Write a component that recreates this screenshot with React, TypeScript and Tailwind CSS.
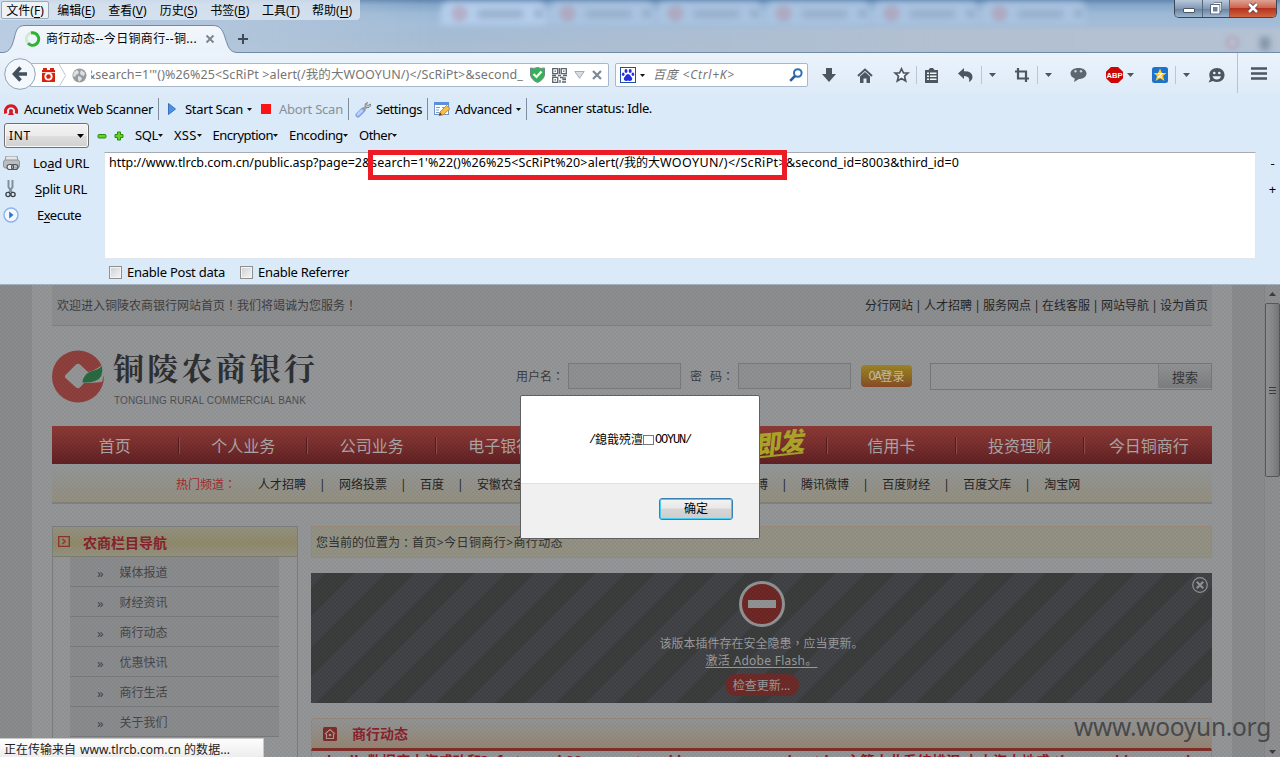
import { useLayoutEffect, useRef, useState } from "react";
import type { ReactNode } from "react";

/* Text spread over the full width of its box by letter spacing. */
function Fit({ className, children }: { className: string; children: ReactNode }) {
  const box = useRef<HTMLSpanElement>(null);
  const text = useRef<HTMLSpanElement>(null);
  const [spacing, setSpacing] = useState(0);
  useLayoutEffect(() => {
    if (!box.current || !text.current) return;
    const n = (text.current.textContent || "x").length;
    setSpacing((box.current.getBoundingClientRect().width - text.current.getBoundingClientRect().width) / n);
  }, []);
  return (
    <span ref={box} className={"inline-block shrink-0 whitespace-pre " + className}>
      <span ref={text} style={{ letterSpacing: spacing }}>
        {children}
      </span>
    </span>
  );
}

/* Full-width punctuation centred in its cell. */
const P = ({ children }: { children: string }) => (
  <span lang="zh-TW" className="font-['Noto_Sans_CJK_TC',sans-serif] leading-none">
    {children}
  </span>
);

/* Half-width 6px cell Latin letters, as in a bitmap song font. */
const Half = ({ children }: { children: string }) => (
  <span className="font-['Liberation_Mono',monospace] text-[12px] tracking-[-1.2px]">{children}</span>
);

const Caret = ({ className = "" }: { className?: string }) => (
  <svg width="7" height="4" viewBox="0 0 7 4" className={"shrink-0 " + className}>
    <path d="M0 0h7L3.5 4z" fill="currentColor" />
  </svg>
);

const TinyCaret = ({ className = "" }: { className?: string }) => (
  <svg width="5" height="3" viewBox="0 0 5 3" className={"shrink-0 " + className}>
    <path d="M0 0h5L2.5 3z" fill="#111" />
  </svg>
);

const menus = [
  ["文件", "F"],
  ["编辑", "E"],
  ["查看", "V"],
  ["历史", "S"],
  ["书签", "B"],
  ["工具", "T"],
  ["帮助", "H"],
];

function TitleBar() {
  return (
    <div className="relative h-[53px] shrink-0 overflow-hidden bg-[linear-gradient(180deg,#6288b0_0px,#86a7ca_5px,#9db9d6_14px,#a4bdd8_25px,#a5bcd4_36px,#abbed2_52px)]">
      <div className="absolute -left-2 top-0 h-[60px] w-[440px] bg-[linear-gradient(90deg,#c3d5e8,#b5c8dc_60%,#a5bbd400)] opacity-70 blur-[3px]" />
      <div className="absolute left-[441px] top-[2px] flex gap-[3px] blur-[3px]">
        {[0, 1, 2, 3, 4, 5].map((i) => (
          <div
            key={i}
            className={
              "flex h-[23px] w-[105px] items-center rounded-t-lg " +
              (i === 0 ? "bg-[#b4cdeb]" : "bg-[#a9c3e0]")
            }
          >
            <span className="ml-3 size-[13px] rounded-full border-[3px] border-[#b4889a]" />
            <span className="ml-3 h-[8px] w-[45px] bg-[#98afca]" />
            <span className="ml-3 size-[7px] bg-[#8fa7c2]" />
          </div>
        ))}
      </div>
      <div className="absolute left-[430px] top-[28px] h-[24px] w-[860px] bg-[linear-gradient(90deg,#abbfd500,#b2c0d1_60%,#b4c2d3)] blur-[2px]" />
      <div className="absolute left-[1226px] top-[36px] size-[13px] rounded-full border-2 border-[#b99dae] blur-[2px]" />
      <div className="absolute left-[1260px] top-[37px] h-[13px] w-[10px] bg-[#8293a8] blur-[3px]" />

      <div className="relative flex h-[20px] w-[360px] items-center rounded-br bg-[#dce6f1cc] pl-px text-[12px] leading-[18px]">
        {menus.map(([name, key], i) => (
          <div
            key={key}
            className={
              "mr-[3.2px] flex h-[18px] w-[48px] items-center justify-center whitespace-nowrap rounded-[2px] border pt-px " +
              (i === 0 ? "border-[#9aa8b8] bg-[#edf2f7]" : "border-transparent")
            }
          >
            {name}(<span className="underline underline-offset-2">{key}</span>)
          </div>
        ))}
      </div>

      <svg className="absolute left-0 top-[23px]" width="1280" height="30" viewBox="0 0 1280 30">
        <defs>
          <linearGradient id="tab" x1="0" y1="0" x2="0" y2="1">
            <stop offset="0" stopColor="#f3f7fc" />
            <stop offset="1" stopColor="#e9f1fa" />
          </linearGradient>
        </defs>
        <path
          d="M0 29.5H3C10 29 12 23 14 16C16 8 17 2.500 25 2.500H213C221 2.500 223 8 225.500 16C228 23 229 29 237 29.500V30H0Z"
          fill="url(#tab)"
        />
        <path
          d="M0 29.500H3C10 29 12 23 14 16C16 8 17 2.500 25 2.500H213C221 2.500 223 8 225.500 16C228 23 229 29 237 29.500H1280"
          fill="none"
          stroke="#7089a6"
        />
      </svg>
      <div className="relative mt-[9px] flex h-[20px] items-center pl-[25px] text-[12px]">
        <svg width="16" height="16" viewBox="0 0 16 16">
          <circle cx="7.500" cy="8" r="6.200" fill="none" stroke="#d3ead2" strokeWidth="3" />
          <path d="M6 2A6.200 6.200 0 1 1 3 12.300" fill="none" stroke="#2fb135" strokeWidth="3" />
        </svg>
        <Fit className="ml-[5px] w-[151px]">商行动态--今日铜商行--铜...</Fit>
        <svg className="ml-[8px]" width="10" height="10" viewBox="0 0 10 10">
          <path d="M1.500 1.500L8.500 8.500M8.500 1.500L1.500 8.500" stroke="#7d8793" strokeWidth="2" />
        </svg>
        <svg className="ml-[22px]" width="12" height="12" viewBox="0 0 12 12">
          <path d="M6 1v10M1 6h10" stroke="#3f4a57" strokeWidth="2" />
        </svg>
      </div>

      <div className="absolute left-[1174px] top-0 flex h-[18px] w-[103px] overflow-hidden rounded-b-[5px] border border-t-0 border-[#3d4652]">
        <div className="flex w-[28px] justify-center border-r border-[#56687d] bg-[linear-gradient(180deg,#b9c9dc,#8199b5_50%,#67829f_51%,#9db5ce)]">
          <span className="mt-[8px] h-[5px] w-[12px] rounded-[1px] border border-[#4d5866] bg-white" />
        </div>
        <div className="flex w-[27px] justify-center border-r border-[#56687d] bg-[linear-gradient(180deg,#b9c9dc,#8199b5_50%,#67829f_51%,#9db5ce)]">
          <svg className="mt-px" width="14" height="14" viewBox="0 0 14 14">
            <path d="M5 2.500H11.500V9H10" fill="none" stroke="#4d5866" strokeWidth="3" />
            <path d="M5 2.500H11.500V9H10" fill="none" stroke="#fff" strokeWidth="1.500" />
            <rect x="3" y="5" width="6.500" height="6.500" fill="none" stroke="#4d5866" strokeWidth="3.500" />
            <rect x="3" y="5" width="6.500" height="6.500" fill="#67829f" stroke="#fff" strokeWidth="2" />
          </svg>
        </div>
        <div className="flex flex-1 justify-center bg-[linear-gradient(180deg,#dfa294,#cc6650_45%,#b5331c_50%,#cf6543)]">
          <svg className="mt-[2px]" width="12" height="12" viewBox="0 0 12 12">
            <path d="M2 2L10 10M10 2L2 10" stroke="#56363a" strokeWidth="4" />
            <path d="M2 2L10 10M10 2L2 10" stroke="#fff" strokeWidth="2.600" />
          </svg>
        </div>
      </div>
    </div>
  );
}

function NavBar() {
  return (
    <div className="relative flex h-[44px] shrink-0 items-center bg-[linear-gradient(180deg,#ebf3fb,#dceaf8)] text-[#4b5661]">
      <div className="ml-[30px] flex h-[24px] w-[579px] items-center rounded-r-[2px] border border-[#a7b8cb] bg-white">
        <svg className="ml-[10px]" width="15" height="15" viewBox="0 0 15 15">
          <path d="M2 0h4v2h3V0h4v2h1v12H1V2h1z" fill="#d5210d" />
          <circle cx="7.500" cy="8.500" r="3.200" fill="none" stroke="#fff" strokeWidth="1.800" />
          <path d="M1 4.500h13" stroke="#fff" strokeWidth=".8" />
        </svg>
        <svg className="ml-[3px]" width="8" height="23" viewBox="0 0 8 23">
          <path d="M0 0L6.500 11.500L0 23" fill="none" stroke="#bcc7d3" />
        </svg>
        <svg className="ml-[5px]" width="15" height="15" viewBox="0 0 15 15">
          <circle cx="7.500" cy="7.500" r="7" fill="#969ba0" />
          <path d="M2 4l3-2 2 2-1 2-2 1-1 2-2-1zM9 2l4 3-1 3-3-1-1-2zM6 8l3 1 1 2-3 3-1-3z" fill="#dde0e2" />
        </svg>
        <span className="ml-[4px] flex w-[434px] overflow-hidden text-[12.500px] text-[#767676]">
          <Fit className="-ml-[5px] w-[437px]">{"&search=1'\"()%26%25<ScRiPt >alert(/我的大WOOYUN/)</ScRiPt>&second_"}</Fit>
        </span>
        <svg className="ml-[5px]" width="15" height="16" viewBox="0 0 15 16">
          <path d="M.5 1Q4 2 7.500 .5Q11 2 14.500 1V8Q13.500 13 7.500 15.500Q1.500 13 .5 8Z" fill="#35b157" stroke="#6e8a85" />
          <path d="M3.500 7L6.500 10L11.500 4.500" fill="none" stroke="#fff" strokeWidth="2.200" />
        </svg>
        <svg className="ml-[7px]" width="15" height="15" viewBox="0 0 15 15" fill="none" stroke="#5a6570" strokeWidth="1.300">
          <path d="M.7.7h5v5h-5zM9.300.7h5v5h-5zM.7 9.300h5v5h-5zM2.500 3.200h1.500M11 3.200h1.500M2.500 11.800h1.500M7.500 0v6M0 7.500h4M6 7.500h3M11 7.500h4M8 9.500h3v2h3M8 12v3M10 14h4M13 9v2" />
        </svg>
        <svg className="ml-[7px]" width="11" height="8" viewBox="0 0 11 8">
          <path d="M.8.5H10.200L5.500 7.300z" fill="#d8dce5" stroke="#a4abb8" />
        </svg>
        <svg className="ml-[7px]" width="10" height="10" viewBox="0 0 10 10">
          <path d="M1 1L9 9M9 1L1 9" stroke="#7c8895" strokeWidth="2.200" />
        </svg>
      </div>
      <svg className="absolute left-[4px] top-[5px]" width="33" height="33" viewBox="0 0 33 33">
        <circle cx="16" cy="16" r="15.300" fill="#f3f8fd" stroke="#8fa3b9" />
        <path d="M9.500 16H23M16.500 9.500L10.500 16L16.500 22.500" fill="none" stroke="#424f5e" strokeWidth="3.600" />
      </svg>

      <div className="ml-[6px] flex h-[24px] w-[193px] items-center rounded-[2px] border border-[#a7b8cb] bg-white">
        <svg className="ml-[4px]" width="16" height="16" viewBox="0 0 16 16">
          <rect x=".5" y=".5" width="15" height="15" fill="#fff" stroke="#1a4fae" />
          <g fill="#2430e0">
            <ellipse cx="6" cy="4" rx="1.500" ry="2" />
            <ellipse cx="10.200" cy="4" rx="1.500" ry="2" />
            <ellipse cx="3.200" cy="7.300" rx="1.300" ry="1.800" />
            <ellipse cx="12.900" cy="7.300" rx="1.300" ry="1.800" />
            <path d="M8 7Q10 7 11 9.500Q13 11 12 13Q10 14.500 8 13.500Q6 14.500 4 13Q3 11 5 9.500Q6 7 8 7Z" />
          </g>
        </svg>
        <TinyCaret className="ml-[4px]" />
        <Fit className="ml-[8px] w-[82px] text-[12px] italic text-[#757575]">{"百度 <Ctrl+K>"}</Fit>
        <svg className="ml-[54px]" width="14" height="14" viewBox="0 0 14 14">
          <circle cx="8.800" cy="5" r="3.800" fill="#fff" stroke="#2f6fae" strokeWidth="2" />
          <path d="M6 8L1.200 12.800" stroke="#2a5f97" strokeWidth="2.600" />
        </svg>
      </div>

      <div className="ml-[3px] flex w-[36px] justify-center">
        <svg width="14" height="14" viewBox="0 0 14 14">
          <path d="M4 0h6v6h4L7 14L0 6h4z" fill="currentColor" />
        </svg>
      </div>
      <div className="flex w-[36px] justify-center">
        <svg width="16" height="15" viewBox="0 0 16 15">
          <path d="M1 8L8 1.500L15 8" fill="none" stroke="currentColor" strokeWidth="2" />
          <path d="M3 8.500L8 4L13 8.500V15H9.500V10.500h-3V15H3z" fill="currentColor" />
        </svg>
      </div>
      <div className="flex w-[33px] justify-center pl-[3px]">
        <svg width="17" height="16" viewBox="0 0 17 16">
          <path d="M8.500 1.800L10.500 6H15L11.500 9.200L12.700 14L8.500 11.500L4.300 14L5.500 9.200L2 6H6.500Z" fill="#f6fafd" stroke="currentColor" strokeWidth="1.700" />
        </svg>
      </div>
      <div className="flex h-[18px] w-[30px] items-center justify-center border-l border-[#b9c6d4]">
        <svg width="15" height="15" viewBox="0 0 15 15">
          <path d="M1 2h3.500L6 0h3l1.500 2H14v13H1z" fill="currentColor" />
          <path d="M3 5.200h2M6 5.200h6.500M3 8.200h2M6 8.200h6.500M3 11.200h2M6 11.200h6.500" stroke="#f2f7fc" strokeWidth="1.500" />
        </svg>
      </div>
      <div className="flex w-[35px] justify-center pl-[5px]">
        <svg width="16" height="14" viewBox="0 0 16 14">
          <path d="M0 5.500L6 0V3.200Q14.500 3 14.500 9Q14.500 12 11 14Q12.500 8 6 8V11Z" fill="currentColor" />
        </svg>
      </div>
      <div className="flex h-[18px] w-[21px] items-center justify-center border-l border-[#b9c6d4]">
        <Caret />
      </div>
      <div className="flex w-[35px] justify-center pl-[5px]">
        <svg width="14" height="14" viewBox="0 0 14 14">
          <path d="M3 0V10.500H14M0 3.500H11V14" fill="none" stroke="currentColor" strokeWidth="2.200" />
        </svg>
      </div>
      <div className="flex h-[18px] w-[21px] items-center justify-center border-l border-[#b9c6d4]">
        <Caret />
      </div>
      <div className="flex w-[40px] justify-center">
        <svg width="17" height="14" viewBox="0 0 17 14">
          <path d="M8.500 0C13 0 16.500 2.200 16.500 5.500S13 11 9 11L4 14L4.800 10.500C2 9.500 .5 7.800 .5 5.500C.5 2.200 4 0 8.500 0Z" fill="#5b6671" />
          <circle cx="5.500" cy="3.200" r="1.200" fill="#c8d0d8" />
          <circle cx="11" cy="3.200" r="1.200" fill="#c8d0d8" />
        </svg>
      </div>
      <div className="flex w-[25px] justify-center pl-[7px]">
        <svg className="shrink-0" width="17" height="16" viewBox="0 0 17 16">
          <path d="M5 0h7l5 4.700v6.600L12 16H5L0 11.300V4.700z" fill="#cc0505" />
          <text x="8.500" y="11" fontSize="7.500" fontWeight="bold" textAnchor="middle" fill="#fff" fontFamily="Liberation Sans">
            ABP
          </text>
        </svg>
      </div>
      <div className="flex w-[14px] justify-center">
        <Caret />
      </div>
      <div className="flex w-[38px] justify-center pl-[8px]">
        <svg width="16" height="16" viewBox="0 0 16 16">
          <rect width="16" height="16" rx="2.500" fill="#1d72cc" />
          <path d="M8 1.500L10 6H14.500L11 9L12.500 14L8 11.300L3.500 14L5 9L1.500 6H6Z" fill="#ffc631" />
          <path d="M6 6.500H10L6.500 10H10" fill="none" stroke="#fff" strokeWidth="1.200" />
        </svg>
      </div>
      <div className="flex h-[18px] w-[21px] items-center justify-center border-l border-[#b9c6d4]">
        <Caret />
      </div>
      <div className="flex w-[41px] justify-center">
        <svg width="17" height="15" viewBox="0 0 17 15">
          <path d="M9 0C13.500 0 16.500 3 16.500 7S13.500 14 9 14Q6.500 14 5 13L.5 14.500L2.300 11Q1.300 9 1.300 7C1.300 3 4.500 0 9 0Z" fill="currentColor" />
          <circle cx="6.300" cy="5" r="1.300" fill="#e8f0f8" />
          <circle cx="11.300" cy="5" r="1.300" fill="#e8f0f8" />
          <path d="M4.500 8.300H13Q12 11.500 8.800 11.500T4.500 8.300Z" fill="#e8f0f8" />
        </svg>
      </div>
      <div className="flex h-[40px] w-[43px] items-center justify-center self-start border-l border-[#b4c2d1]">
        <svg width="16" height="13" viewBox="0 0 16 13">
          <path d="M0 1.500h16M0 6.500h16M0 11.500h16" stroke="currentColor" strokeWidth="2.600" />
        </svg>
      </div>
    </div>
  );
}

function ScannerBar() {
  return (
    <div className="flex h-[24px] shrink-0 items-center text-[13px] leading-[18px]">
      <svg className="ml-[4px]" width="14" height="12" viewBox="0 0 14 12">
        <path d="M1.800 10.500A5.600 5.600 0 1 1 12.200 10.500" fill="none" stroke="#d81921" strokeWidth="3" />
        <circle cx="7" cy="8" r="2" fill="#d81921" />
        <path d="M4 12L6 8.500H8L10 12Z" fill="#d81921" />
      </svg>
      <Fit className="-mt-px ml-[6px] w-[129px]">Acunetix Web Scanner</Fit>
      <span className="ml-[5px] h-[22px] w-px bg-[#7f8d9d]" />
      <svg className="ml-[9px]" width="8" height="12" viewBox="0 0 8 12">
        <path d="M.5.5L7.500 6L.5 11.500z" fill="#4a92e8" stroke="#3a6fc0" />
      </svg>
      <Fit className="-mt-px ml-[9px] w-[58px]">Start Scan</Fit>
      <TinyCaret className="ml-[4px]" />
      <span className="ml-[9px] size-[10px] bg-[#fb1414]" />
      <Fit className="-mt-px ml-[8px] w-[64px] text-[#8b8f94]">Abort Scan</Fit>
      <span className="ml-[5px] h-[22px] w-px bg-[#7f8d9d]" />
      <svg className="ml-[6px]" width="17" height="17" viewBox="0 0 17 17">
        <path d="M3 14L8 9" stroke="#7ea3e6" strokeWidth="5" strokeLinecap="round" />
        <path d="M3 13.500L7 9.500" stroke="#b9d2fa" strokeWidth="2.500" strokeLinecap="round" />
        <path d="M8 9L12 5" stroke="#9a9fa5" strokeWidth="3" />
        <path d="M12.500 1.500Q9.500 2 10 5Q11 7.500 14 6.500Q16 5.500 15.500 3L13 4.500L11.500 3.500Z" fill="#c6c9cd" stroke="#85898f" />
      </svg>
      <Fit className="-mt-px ml-[4px] w-[46px]">Settings</Fit>
      <span className="ml-[5px] h-[22px] w-px bg-[#7f8d9d]" />
      <svg className="ml-[6px]" width="17" height="16" viewBox="0 0 17 16">
        <rect x=".5" y="1.500" width="14" height="12" fill="#fff" stroke="#6f93c9" />
        <path d="M0 1h15v3H0z" fill="#5b8edb" />
        <path d="M2 6.500h4M2 9h3M8 6.500h5M2 11.500h3" stroke="#7a9bcb" strokeWidth="1.200" />
        <path d="M5 14.500L6 11L12.500 4.500L16 7.500L9 14Z" fill="#f5c04a" stroke="#c58a2c" />
        <path d="M5 14.500L6 11.500L8 13.500Z" fill="#5b3a1b" />
      </svg>
      <Fit className="-mt-px ml-[4px] w-[57px]">Advanced</Fit>
      <TinyCaret className="ml-[4px]" />
      <span className="ml-[5px] h-[22px] w-px bg-[#7f8d9d]" />
      <Fit className="-mt-[3px] ml-[9px] w-[116px]">Scanner status: Idle.</Fit>
    </div>
  );
}

function HackBar() {
  return (
    <div className="flex h-[163px] shrink-0 flex-col text-[13px] leading-[18px]">
      <div className="flex h-[29px] items-center">
        <div className="ml-[4px] flex h-[25px] w-[85px] items-center justify-between rounded-[3px] border border-[#707070] bg-[linear-gradient(180deg,#f3f3f3,#ebebeb_50%,#dedede_51%,#d0d0d0)] pl-[4px] pr-[4px] shadow-[inset_0_0_0_1px_#fafafa]">
          <Fit className="w-[22px] text-[12px]">INT</Fit>
          <Caret className="text-black" />
        </div>
        <svg className="ml-[8px]" width="10" height="10" viewBox="0 0 10 10">
          <rect x="1" y="3.500" width="8" height="3.500" rx="1" fill="#63d51b" stroke="#2b8a10" />
        </svg>
        <svg className="ml-[7px]" width="10" height="10" viewBox="0 0 10 10">
          <path d="M3.500 1h3v2.500H9v3H6.500V9h-3V6.500H1v-3h2.500z" fill="#63d51b" stroke="#2b8a10" />
        </svg>
        <div className="flex items-center gap-[11px] pl-[11px]">
          <span className="flex items-center">
            <Fit className="-mt-px w-[23px]">SQL</Fit>
            <TinyCaret />
          </span>
          <span className="flex items-center">
            <Fit className="-mt-px w-[22.500px]">XSS</Fit>
            <TinyCaret />
          </span>
          <span className="flex items-center">
            <Fit className="-mt-px w-[60.500px]">Encryption</Fit>
            <TinyCaret />
          </span>
          <span className="flex items-center">
            <Fit className="-mt-px w-[54px]">Encoding</Fit>
            <TinyCaret />
          </span>
          <span className="flex items-center">
            <Fit className="-mt-px w-[33px]">Other</Fit>
            <TinyCaret />
          </span>
        </div>
      </div>
      <div className="flex h-[110px]">
        <div className="flex w-[104px] flex-col">
          <div className="flex h-[26px] items-center pl-[3px]">
            <svg width="17" height="15" viewBox="0 0 17 15">
              <path d="M3 0h11l1 5h-13z" fill="#e4e6e8" stroke="#8f949a" />
              <rect x=".5" y="4" width="16" height="8" rx="2" fill="#b9bec3" stroke="#8e949a" />
              <rect x="4" y="8.500" width="6.500" height="5" rx="2.500" fill="#e8eaec" stroke="#4f5459" strokeWidth="1.200" />
              <rect x="8.500" y="8.500" width="6.500" height="5" rx="2.500" fill="none" stroke="#4f5459" strokeWidth="1.200" />
            </svg>
            <Fit className="ml-[13px] w-[56px]">
              Lo<u className="underline-offset-2">a</u>d URL
            </Fit>
          </div>
          <div className="flex h-[26px] items-center pl-[5px]">
            <svg width="11" height="18" viewBox="0 0 11 18">
              <path d="M3.500 0V7L7 12.500M7.500 0V7L4 12.500" fill="none" stroke="#7e9198" strokeWidth="2" />
              <circle cx="3" cy="14.500" r="2.100" fill="none" stroke="#3b444b" strokeWidth="1.400" />
              <circle cx="8" cy="14.500" r="2.100" fill="none" stroke="#3b444b" strokeWidth="1.400" />
            </svg>
            <Fit className="ml-[19px] w-[52px]">
              <u className="underline-offset-2">S</u>plit URL
            </Fit>
          </div>
          <div className="flex h-[26px] items-center pl-[3px]">
            <svg width="16" height="16" viewBox="0 0 16 16">
              <circle cx="8" cy="8" r="7" fill="#f2f8ff" stroke="#8fb4ea" strokeWidth="1.500" />
              <path d="M6.200 4.500L10.500 8L6.200 11.500z" fill="#2f74d4" />
            </svg>
            <Fit className="ml-[18px] w-[44px]">
              E<u className="underline-offset-2">x</u>ecute
            </Fit>
          </div>
        </div>
        <div className="relative mt-[2px] h-[107px] w-[1152px] border border-[#e1e7ee] border-t-[#a7abb1] bg-white pl-[4px] text-[12.500px] leading-[19px]">
          <Fit className="w-[262px]">{"http://www.tlrcb.com.cn/public.asp?page=2&"}</Fit>
          <Fit className="w-[253px]">{"search=1'%22()%26%25<ScRiPt%20>alert(/"}</Fit>
          <Fit className="w-[36px] text-[12px]">我的大</Fit>
          <Fit className="w-[126px]">{"WOOYUN/)</ScRiPt>"}</Fit>
          <Fit className="w-[173px]">{"&second_id=8003&third_id=0"}</Fit>
          <div className="absolute left-[263px] top-[-3px] h-[30px] w-[419px] border-5 border-[#ed1c24]" />
        </div>
        <div className="flex flex-1 flex-col items-center pl-[9px] leading-[26px]">
          <span>-</span>
          <span>+</span>
        </div>
      </div>
      <div className="flex h-[24px] items-center pl-[109px]">
        <span className="size-[13px] border border-[#8e8f8f] bg-[linear-gradient(135deg,#cbcfd5,#f6f6f6)] shadow-[inset_0_0_0_1px_#f4f4f4]" />
        <Fit className="ml-[5px] w-[98px]">Enable Post data</Fit>
        <span className="ml-[15px] size-[13px] border border-[#8e8f8f] bg-[linear-gradient(135deg,#cbcfd5,#f6f6f6)] shadow-[inset_0_0_0_1px_#f4f4f4]" />
        <Fit className="ml-[5px] w-[91px]">Enable Referrer</Fit>
      </div>
    </div>
  );
}

const topLinks = ["分行网站", "人才招聘", "服务网点", "在线客服", "网站导航", "设为首页"];
const navItems = ["首页", "个人业务", "公司业务", "电子银行", "", "即发", "信用卡", "投资理财", "今日铜商行"];
const sideItems = ["媒体报道", "财经资讯", "商行动态", "优惠快讯", "商行生活", "关于我们"];

function Channels({ items }: { items: string[] }) {
  return (
    <>
      {items.map((item, i) => (
        <span key={item} className="flex items-center">
          {i > 0 && <span className="mx-[16px] w-[1px] -indent-[3px]">|</span>}
          {item}
        </span>
      ))}
    </>
  );
}

function BankPage() {
  return (
    <div className="relative flex h-[472px] bg-[#88898b] text-[12px] leading-[18px]">
      <div className="ml-[32px] flex w-[1200px] flex-col bg-[#929395] px-[20px]">
        <div className="flex h-[41px] shrink-0 items-center justify-between border-b border-[#7d7e81] bg-[#8a8b8d] pl-[5px] pr-[4px] pt-[2px]">
          <span className="text-[#3a3b3d]">
            欢迎进入铜陵农商银行网站首页<P>！</P>我们将竭诚为您服务<P>！</P>
          </span>
          <span className="flex text-[#222325]">
            {topLinks.map((l, i) => (
              <span key={l} className="flex">
                {i > 0 && <span className="w-[11px] text-center">|</span>}
                {l}
              </span>
            ))}
          </span>
        </div>

        <div className="flex h-[100px] shrink-0 items-start">
          <svg className="mt-[24px]" width="53" height="53" viewBox="0 0 53 53">
            <circle cx="26" cy="26.500" r="26" fill="#8b3d39" />
            <path d="M13.500 25L24 14.500Q26 13 28 14.500L36 22Q42 21 50 15L53 22L50 32Q42 33 32 33L28 37.500Q26 39 24 37.500L13.500 28Q12 26.500 13.500 25Z" fill="#929395" />
            <path d="M30.500 32.500Q31 24 40 21Q46 20 50 16Q52 28 43 31Q37 33 30.500 32.500Z" fill="#27673c" />
          </svg>
          <div className="ml-[8px] mt-[17px] w-[210px]">
            <div className="whitespace-nowrap font-['Noto_Serif_CJK_SC','Noto_Sans_CJK_SC',serif] text-[31px] font-bold leading-[48px] tracking-[3.200px] text-[#2c2d2f]">铜陵农商银行</div>
            <Fit className="-mt-[3px] ml-[1px] w-[192px] font-['Liberation_Sans'] text-[10px] leading-[14px] text-[#4c4d50]">
              TONGLING RURAL COMMERCIAL BANK
            </Fit>
          </div>
          <span className="ml-[193px] mt-[42px] w-[52px] whitespace-nowrap text-[#38393b]">
            用户名<P>：</P>
          </span>
          <span className="mt-[37px] h-[26px] w-[113px] border border-[#77787a] bg-[#8d8e90]" />
          <span className="ml-[9px] mt-[42px] w-[48px] whitespace-pre text-[#38393b]">
            密<span className="inline-block w-[8px]" />码<P>：</P>
          </span>
          <span className="mt-[37px] h-[26px] w-[113px] border border-[#77787a] bg-[#8d8e90]" />
          <span className="ml-[10px] mt-[39px] flex h-[22px] w-[51px] items-center justify-center rounded-[4px] bg-[linear-gradient(180deg,#9a8221,#8c6a22_50%,#874922)] pt-px text-[#c3b9a3]">
            <Half>OA</Half>登录
          </span>
          <span className="ml-[18px] mt-[37px] flex h-[27px] w-[282px] justify-end border border-[#757678]">
            <span className="flex h-[24px] w-[53px] items-center justify-center border-l border-[#7d7e80] bg-[linear-gradient(180deg,#8f9092,#7b7c7d)] pt-[2px] text-[13px] text-[#333436]">搜索</span>
          </span>
        </div>

        <div className="grid h-[38px] shrink-0 grid-cols-[128.500px_128.500px_128.500px_128.500px_128.500px_134px_129px_128px_1fr] items-center bg-[linear-gradient(180deg,#8a3733,#762c2b_50%,#5d1d20)] text-[16px] text-[#aaa3a4]">
          {navItems.map((n, i) => (
            <div key={i} className="flex h-full items-center">
              {n === "即发" ? (
                <div className="flex flex-1 -skew-x-12 -rotate-6 justify-end pr-[21px]">
                  <span className="border-b-2 border-[#a39e26] text-[25px] font-black leading-[24px] tracking-[-1px] text-[#a9a326]">{n}</span>
                </div>
              ) : (
                <span className="flex-1 pt-[2px] text-center">{n}</span>
              )}
              {i < 8 && i !== 4 && <span className="mr-px h-[17px] w-[2px] border-l border-r border-l-[#50191b] border-r-[#8d4a48]" />}
            </div>
          ))}
        </div>

        <div className="flex h-[40px] shrink-0 items-center whitespace-nowrap border-b-2 border-[#7f7f7c] bg-[linear-gradient(180deg,#929496,#918f84_70%,#928e7e)] pl-[124px] pt-[3px] text-[#1f2022]">
          <span className="mr-[22px] text-[#a3262d]">
            热门频道<P>：</P>
          </span>
          <Channels items={["人才招聘", "网络投票", "百度", "安徽农金"]} />
          <span className="w-[231px]" />
          <Channels items={["博", "腾讯微博", "百度财经", "百度文库", "淘宝网"]} />
        </div>

        <div className="mt-[22px] flex flex-1 gap-[13px]">
          <div className="flex w-[246px] flex-col border border-b-0 border-[#7c7c7a]">
            <div className="flex h-[30px] shrink-0 items-center border-b border-[#7a7a6e] bg-[linear-gradient(180deg,#918f80,#8e8768_55%,#92907f)]">
              <svg className="ml-[5px]" width="12" height="11" viewBox="0 0 12 11">
                <path d="M.7.7h10.600v9.600H.7zM4.500 3L7.200 5.500L4.500 8" fill="none" stroke="#8a3029" strokeWidth="1.300" />
              </svg>
              <span className="ml-[13px] pt-[3px] text-[14px] font-bold text-[#85202a]">农商栏目导航</span>
            </div>
            <div className="ml-[17px] flex w-[209px] flex-col">
              {sideItems.map((s) => (
                <div key={s} className="flex h-[30px] items-center border-b border-[#77787a] bg-[#88898b] pl-[27px] pt-[2px] text-[#434447]">
                  <span className="w-[22.500px] text-[13px]">»</span>
                  {s}
                </div>
              ))}
            </div>
          </div>

          <div className="flex w-[901px] flex-col">
            <div className="flex h-[32px] items-center whitespace-nowrap border border-[#988777] bg-[#918f81] pl-[4px] pt-[2px] text-[#2c2d2c]">
              您当前的位置为<P>：</P>
              <Fit className="w-[151px]">首页&gt;今日铜商行&gt;商行动态</Fit>
            </div>
            <div className="relative mt-[15px] flex h-[130px] shrink-0 flex-col items-center bg-[repeating-linear-gradient(135deg,#3e4043_0px,#3e4043_9.900px,#383939_9.900px,#383939_31.100px,#3e4043_31.100px,#3e4043_42.430px)] text-[#97989a]">
              <svg className="mt-[8px]" width="46" height="46" viewBox="0 0 46 46">
                <circle cx="23" cy="23" r="21.500" fill="#6c2523" stroke="#8f9092" strokeWidth="3" />
                <rect x="9" y="19" width="28" height="8" fill="#8f9092" />
              </svg>
              <span className="mt-[8px] leading-[18px]">
                该版本插件存在安全隐患<P>，</P>应当更新。
              </span>
              <Fit className="mt-[-1px] h-[18px] w-[112px] underline underline-offset-2">激活 Adobe Flash。</Fit>
              <span className="mt-[4px] flex h-[22px] w-[74px] items-center justify-center rounded-full bg-[#6a2825] pt-[2px] text-[12px]">检查更新...</span>
              <svg className="absolute right-[4px] top-[4px]" width="16" height="16" viewBox="0 0 16 16">
                <circle cx="8" cy="8" r="7.300" fill="none" stroke="#8f9092" strokeWidth="1.200" />
                <path d="M4.800 4.800L11.200 11.200M11.200 4.800L4.800 11.200" stroke="#8f9092" strokeWidth="2.200" />
              </svg>
            </div>
            <div className="mt-[15px] flex h-[33px] shrink-0 items-center rounded-t-[3px] border border-b-3 border-[#93867b] border-b-[#7d2c26] bg-[linear-gradient(180deg,#8f9293,#928b82_50%,#938270)]">
              <svg className="ml-[11px]" width="14" height="14" viewBox="0 0 14 14">
                <rect width="14" height="14" rx="1.500" fill="#7e2825" />
                <path d="M2 7L7 2.500L12 7M3.500 7V11.500H10.500V7" fill="none" stroke="#a89392" strokeWidth="1.200" />
                <circle cx="7" cy="8" r="1.300" fill="#a89392" />
              </svg>
              <span className="ml-[15px] text-[14px] font-bold text-[#85202a]">商行动态</span>
            </div>
            <div className="h-[6px] overflow-hidden border-x border-[#868485] pl-[15px] pt-[2px] text-[14px] font-bold leading-[16px] text-[#93151a]">
              <Fit className="w-[868px]">hedh 数据库大海成功和Info to and 00 percent and home come and not be 主管本此系统排泥 土土海土地成 there nekkomarrak</Fit>
            </div>
          </div>
        </div>
      </div>

      <div className="ml-auto flex w-[16px] flex-col items-center border-l border-[#828385] bg-[#8c8d8f]">
        <svg className="mt-[7px]" width="7" height="4" viewBox="0 0 7 4">
          <path d="M0 4h7L3.500 0z" fill="#3a3b3d" />
        </svg>
        <div className="mt-[7px] flex h-[174px] w-[15px] flex-col items-center justify-center gap-[2px] rounded-[2px] border border-[#55565a] bg-[linear-gradient(90deg,#8e8f91,#858688_50%,#737476)]">
          <span className="h-px w-[7px] bg-[#3b3c3e]" />
          <span className="h-px w-[7px] bg-[#3b3c3e]" />
          <span className="h-px w-[7px] bg-[#3b3c3e]" />
        </div>
        <svg className="mb-[3px] mt-auto" width="7" height="4" viewBox="0 0 7 4">
          <path d="M0 0h7L3.500 4z" fill="#3a3b3d" />
        </svg>
      </div>

      <div className="pointer-events-none absolute inset-0 bg-[repeating-conic-gradient(#000_0%_25%,#fff_0%_50%)] bg-[length:4px_4px] opacity-[0.025]" />

      <div className="absolute left-[520px] top-[110px] flex h-[144px] w-[240px] flex-col overflow-hidden rounded-[2px] border border-[#5f6062] bg-white text-black">
        <div className="flex h-[88px] items-center justify-center border-b border-[#dfdfdf]">
          <Half>/</Half>
          鎴戠殑澶
          <span className="mr-px h-[10px] w-[11px] border border-[#777]" />
          <Half>OOYUN/</Half>
        </div>
        <div className="flex flex-1 items-start justify-end bg-[#f0f0f0] pr-[26px] pt-[14px]">
          <span className="flex h-[22px] w-[74px] items-center justify-center rounded-[3px] border border-[#3c7fb1] bg-[linear-gradient(180deg,#f3f3f3,#e8e8e8_45%,#d6d6d6_50%,#cdcdcd)] shadow-[inset_0_0_0_1px_#46cdf4]">
            确定
          </span>
        </div>
      </div>

      <Fit className="absolute left-[1074px] top-[425px] w-[197px] text-[24.500px] leading-[34px] text-[#48494b]">www.wooyun.org</Fit>

      <div className="absolute bottom-0 left-0 flex h-[19px] w-[264px] items-center border-r border-t border-[#c9c9c9] bg-[linear-gradient(180deg,#fdfdfd,#ededed)] pl-[4px] pt-[3px] text-[#222]">
        <Fit className="w-[72px]">正在传输来自</Fit>
        <Fit className="ml-[4px] w-[150px]">www.tlrcb.com.cn 的数据...</Fit>
      </div>
    </div>
  );
}

export default function App() {
  return (
    <div className="flex h-[757px] w-[1280px] flex-col overflow-hidden bg-[#daeaf9] font-['Noto_Sans','Noto_Sans_CJK_SC',sans-serif] text-black">
      <TitleBar />
      <NavBar />
      <ScannerBar />
      <HackBar />
      <div className="h-px shrink-0 bg-[#a3b1c0]" />
      <BankPage />
    </div>
  );
}
